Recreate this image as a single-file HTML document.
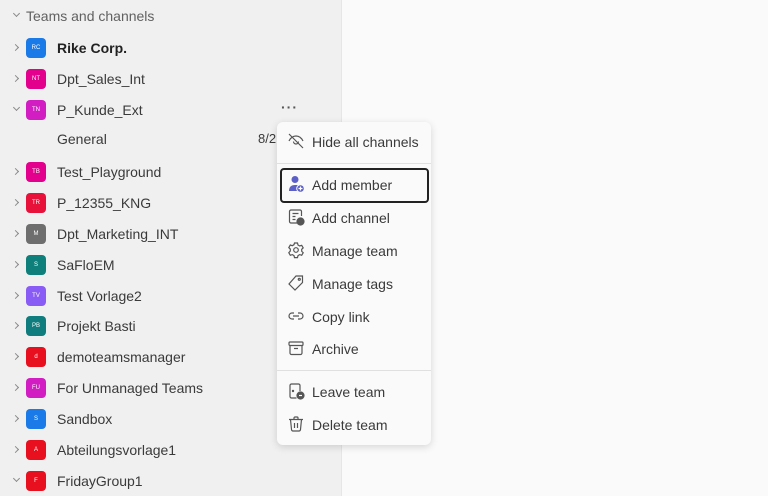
<html><head><style>
body{margin:0;width:768px;height:496px;overflow:hidden;background:#fafafa;font-family:"Liberation Sans",sans-serif;position:relative}
.side{position:absolute;left:0;top:0;width:341px;height:496px;background:#f0f0f0;border-right:1px solid #e6e6e6}
.t{position:absolute;font-size:14px;color:#3a3a3a;white-space:nowrap;line-height:16px}
.av{position:absolute;left:26px;width:20px;height:20px;border-radius:4px;color:#fff;font-size:6px;text-align:center;line-height:20px}
.ch{position:absolute;left:13px;width:4px;height:4px;border-right:1px solid #8a8a8a;border-bottom:1px solid #8a8a8a}
.r{transform:rotate(-45deg)}.d{transform:rotate(45deg)}
.menu{position:absolute;left:277px;top:122px;width:154px;height:323px;background:#fafafa;border-radius:6px;box-shadow:0 2px 8px rgba(0,0,0,.15)}
.mi{position:absolute;left:35px;font-size:14px;color:#3a3a3a;line-height:16px}
.ic{position:absolute;left:10px;width:18px;height:18px}
.hr{position:absolute;left:0;right:0;height:1px;background:#e0e0e0}
</style></head><body>
<div class="side">
<div class="ch d" style="left:14px;top:11px"></div>
<div class="t" style="left:26px;top:8px;color:#616161">Teams and channels</div>
</div>
<div class="ch r" style="top:45px"></div><div class="av" style="top:38px;background:#1a7ae8">RC</div><div class="t" style="left:57px;top:40px;font-weight:bold;color:#222">Rike Corp.</div>
<div class="ch r" style="top:76px"></div><div class="av" style="top:69px;background:#e3008c">NT</div><div class="t" style="left:57px;top:71px">Dpt_Sales_Int</div>
<div class="ch d" style="top:105px;left:14px"></div><div class="av" style="top:100px;background:#d21dc3">TN</div><div class="t" style="left:57px;top:102px">P_Kunde_Ext</div>
<div class="t" style="left:281px;top:99px;font-weight:bold;letter-spacing:1px;color:#555">···</div>
<div class="t" style="left:57px;top:131px">General</div><div class="t" style="left:258px;top:131px;font-size:13px">8/2</div>
<div class="ch r" style="top:169px"></div><div class="av" style="top:162px;background:#e3008c">TB</div><div class="t" style="left:57px;top:164px">Test_Playground</div>
<div class="ch r" style="top:200px"></div><div class="av" style="top:193px;background:#e8113a">TR</div><div class="t" style="left:57px;top:195px">P_12355_KNG</div>
<div class="ch r" style="top:231px"></div><div class="av" style="top:224px;background:#6e6e6e">M</div><div class="t" style="left:57px;top:226px">Dpt_Marketing_INT</div>
<div class="ch r" style="top:262px"></div><div class="av" style="top:255px;background:#0e7f7a">S</div><div class="t" style="left:57px;top:257px">SaFloEM</div>
<div class="ch r" style="top:293px"></div><div class="av" style="top:286px;background:#8a5cf6">TV</div><div class="t" style="left:57px;top:288px">Test Vorlage2</div>
<div class="ch r" style="top:323px"></div><div class="av" style="top:316px;background:#0f7d7d">PB</div><div class="t" style="left:57px;top:318px">Projekt Basti</div>
<div class="ch r" style="top:354px"></div><div class="av" style="top:347px;background:#e8101e">d</div><div class="t" style="left:57px;top:349px">demoteamsmanager</div>
<div class="ch r" style="top:385px"></div><div class="av" style="top:378px;background:#d21dc3">FU</div><div class="t" style="left:57px;top:380px">For Unmanaged Teams</div>
<div class="ch r" style="top:416px"></div><div class="av" style="top:409px;background:#1a7ae8">S</div><div class="t" style="left:57px;top:411px">Sandbox</div>
<div class="ch r" style="top:447px"></div><div class="av" style="top:440px;background:#e8101e">A</div><div class="t" style="left:57px;top:442px">Abteilungsvorlage1</div>
<div class="ch d" style="top:476px;left:14px"></div><div class="av" style="top:471px;background:#e8101e">F</div><div class="t" style="left:57px;top:473px">FridayGroup1</div>

<div class="menu">
<svg class="ic" style="top:10px" viewBox="0 0 18 18" fill="none" stroke="#555" stroke-width="1.2"><path d="M2 9c2-4 5-5 7-5s5 1 7 5M6.5 9.5a2.5 2.5 0 0 0 5 0M2 2l14 14"/></svg>
<div class="mi" style="top:12px">Hide all channels</div>
<div class="hr" style="top:41px"></div>
<div style="position:absolute;left:3px;top:46px;width:145px;height:31px;border:2px solid #222;border-radius:4px"></div>
<svg class="ic" style="top:53px" viewBox="0 0 18 18"><circle cx="8" cy="4.5" r="3.5" fill="#5b5fc7"/><path d="M2 16c0-4 2-6 6-6s4 1 4 1v5z" fill="#5b5fc7"/><circle cx="13.5" cy="13.5" r="3.8" fill="#5b5fc7" stroke="#fafafa"/><path d="M13.5 11.5v4M11.5 13.5h4" stroke="#fff" stroke-width="1.2"/></svg>
<div class="mi" style="top:55px">Add member</div>
<svg class="ic" style="top:86px" viewBox="0 0 18 18" fill="none" stroke="#555" stroke-width="1.2"><path d="M10 15H4a1.5 1.5 0 0 1-1.5-1.5v-10A1.5 1.5 0 0 1 4 2h9a1.5 1.5 0 0 1 1.5 1.5V8M5.5 5.5h6M5.5 8.5h3M5.5 11.5h3"/><circle cx="13.5" cy="13.5" r="3.5" fill="#555"/></svg>
<div class="mi" style="top:88px">Add channel</div>
<svg class="ic" style="top:119px" viewBox="0 0 18 18" fill="none" stroke="#555" stroke-width="1.2"><path d="M7.5 2h3l.5 2 1.7 1 2-.7 1.5 2.6-1.5 1.4v2l1.5 1.4-1.5 2.6-2-.7-1.7 1-.5 2h-3l-.5-2-1.7-1-2 .7-1.5-2.6L3.3 10V8L1.8 6.6l1.5-2.6 2 .7 1.7-1z"/><circle cx="9" cy="9" r="2.3"/></svg>
<div class="mi" style="top:121px">Manage team</div>
<svg class="ic" style="top:152px" viewBox="0 0 18 18" fill="none" stroke="#555" stroke-width="1.2"><path d="M9 2h6.5v6.5L8 16 2 10z"/><circle cx="12.3" cy="5.3" r="1"/></svg>
<div class="mi" style="top:154px">Manage tags</div>
<svg class="ic" style="top:185px" viewBox="0 0 18 18" fill="none" stroke="#555" stroke-width="1.2"><path d="M7 6H5a3 3 0 0 0 0 6h2M11 6h2a3 3 0 0 1 0 6h-2M6 9h6"/></svg>
<div class="mi" style="top:187px">Copy link</div>
<svg class="ic" style="top:217px" viewBox="0 0 18 18" fill="none" stroke="#555" stroke-width="1.2"><rect x="2" y="3" width="14" height="3.5" rx="1"/><path d="M3 6.5V14a1.5 1.5 0 0 0 1.5 1.5h9A1.5 1.5 0 0 0 15 14V6.5M7 9.5h4"/></svg>
<div class="mi" style="top:219px">Archive</div>
<div class="hr" style="top:248px"></div>
<svg class="ic" style="top:260px" viewBox="0 0 18 18" fill="none" stroke="#555" stroke-width="1.2"><path d="M9.5 16H4.5A1.5 1.5 0 0 1 3 14.5v-11A1.5 1.5 0 0 1 4.5 2h7A1.5 1.5 0 0 1 13 3.5V9"/><circle cx="6" cy="9" r=".6" fill="#555"/><circle cx="13.5" cy="13.5" r="3.5" fill="#555"/><path d="M15 13.5h-3" stroke="#fff"/></svg>
<div class="mi" style="top:262px">Leave team</div>
<svg class="ic" style="top:293px" viewBox="0 0 18 18" fill="none" stroke="#555" stroke-width="1.2"><path d="M2 4.5h14M7 4.5V3a1 1 0 0 1 1-1h2a1 1 0 0 1 1 1v1.5M3.5 4.5l1 10a1.5 1.5 0 0 0 1.5 1.5h6a1.5 1.5 0 0 0 1.5-1.5l1-10M7.5 8v5M10.5 8v5"/></svg>
<div class="mi" style="top:295px">Delete team</div>
</div>
</body></html>
